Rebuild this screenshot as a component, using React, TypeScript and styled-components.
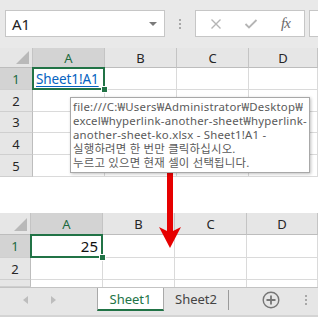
import React from 'react';
import styled, { createGlobalStyle } from 'styled-components';

const Global = createGlobalStyle`
  html, body { margin: 0; padding: 0; background: #fff; }
  body { width: 318px; height: 317px; overflow: hidden; }
`;

const FONT = `"Noto Sans", "Noto Sans CJK KR", sans-serif`;

const Page = styled.div`
  position: relative;
  width: 318px;
  height: 317px;
  overflow: hidden;
  display: flex;
  flex-direction: column;
  font-family: ${FONT};
  background: #fff;
`;

/* ---------- formula bar ---------- */
const FormulaBar = styled.div`
  height: 48px;
  flex: none;
  box-sizing: border-box;
  background: #e9e9e9;
  display: flex;
  align-items: flex-start;
  padding: 10px 0 0 5px;
`;

const NameBox = styled.div`
  width: 160px;
  height: 27px;
  box-sizing: border-box;
  background: #fff;
  border: 1px solid #c6c6c6;
  display: flex;
  align-items: center;
  justify-content: space-between;
  padding: 0 7px 0 6px;
  font-size: 15px;
  color: #222;
`;

const DropTri = styled.span`
  width: 0;
  height: 0;
  border-left: 4px solid transparent;
  border-right: 4px solid transparent;
  border-top: 4px solid #7a7a7a;
`;

const Grip = styled.div`
  width: 30px;
  height: 27px;
  display: flex;
  flex-direction: column;
  align-items: center;
  justify-content: center;
  gap: 2px;
`;

const GripDot = styled.span`
  width: 2px;
  height: 2px;
  background: #a8a8a8;
`;

const FxBox = styled.div`
  width: 110px;
  height: 27px;
  box-sizing: border-box;
  background: #fff;
  border: 1px solid #c6c6c6;
  display: flex;
  padding-left: 2px;
`;

const FxSlot = styled.div`
  width: 35px;
  display: flex;
  align-items: center;
  justify-content: center;
`;

const FxText = styled.span`
  font-family: "Liberation Serif", serif;
  font-style: italic;
  font-size: 15px;
  color: #6a6a6a;
  letter-spacing: -1px;
`;

const FormulaInput = styled.div`
  flex: 1;
  height: 27px;
  margin-left: 4px;
  box-sizing: border-box;
  background: #fff;
  border: 1px solid #c6c6c6;
  border-right: none;
`;

/* ---------- sheet grid ---------- */
const Sheet = styled.div<{ $rh: number; $rows: string }>`
  display: grid;
  flex: none;
  grid-template-columns: ${p => p.$rh}px 72px 72px 72px 1fr;
  grid-template-rows: ${p => p.$rows};
  background: #fff;
`;

const Corner = styled.div`
  position: relative;
  background: #e6e6e6;
  border-right: 1px solid #c4c4c4;
  border-bottom: 1px solid #bdbdbd;
`;

const CornerTri = styled.span`
  position: absolute;
  right: 3px;
  bottom: 3px;
  width: 0;
  height: 0;
  border-style: solid;
  border-width: 0 0 13px 13px;
  border-color: transparent transparent #b9b9b9 transparent;
`;

const ColHead = styled.div<{ $sel?: boolean }>`
  background: ${p => (p.$sel ? '#d3d3d3' : '#e6e6e6')};
  color: ${p => (p.$sel ? '#1d6a3f' : '#262626')};
  border-right: 1px solid #c4c4c4;
  border-bottom: 1px solid ${p => (p.$sel ? '#a9a9a9' : '#bdbdbd')};
  display: flex;
  align-items: center;
  justify-content: center;
  font-size: 13px;
`;

const RowHead = styled.div<{ $sel?: boolean }>`
  background: ${p => (p.$sel ? '#d3d3d3' : '#e6e6e6')};
  color: ${p => (p.$sel ? '#1d6a3f' : '#262626')};
  border-right: 1px solid #bdbdbd;
  border-bottom: 1px solid #cfcfcf;
  display: flex;
  align-items: center;
  justify-content: center;
  font-size: 13px;
`;

const Cell = styled.div<{ $partial?: boolean }>`
  position: relative;
  border-right: 1px solid #dadada;
  border-bottom: ${p => (p.$partial ? 'none' : '1px solid #dadada')};
`;

const ActiveCell = styled.div<{ $right?: boolean }>`
  position: relative;
  border-right: 1px solid #dadada;
  border-bottom: 1px solid #dadada;
  display: flex;
  align-items: center;
  justify-content: ${p => (p.$right ? 'flex-end' : 'flex-start')};
  padding: 0 4px 0 3px;
  font-size: 15px;
  color: #111;
  z-index: 1;
  &::after {
    content: '';
    position: absolute;
    left: -1px;
    top: -1px;
    right: -1px;
    bottom: -1px;
    border: 2px solid #217346;
    pointer-events: none;
  }
`;

const FillHandle = styled.span`
  position: absolute;
  right: -4px;
  bottom: -4px;
  width: 5px;
  height: 5px;
  background: #217346;
  border: 1px solid #fff;
  z-index: 2;
`;

const LinkText = styled.span`
  color: #0563c1;
  text-decoration: underline;
  text-underline-offset: 2px;
  font-size: 13.5px;
  letter-spacing: -0.1px;
`;

const Spacer = styled.div`
  height: 36px;
  flex: none;
`;

/* ---------- tab bar ---------- */
const TabBar = styled.div`
  height: 24px;
  flex: none;
  box-sizing: border-box;
  display: flex;
  align-items: stretch;
  background: #e6e6e6;
  border-top: 1px solid #c3c3c3;
`;

const NavArea = styled.div`
  width: 97px;
  display: flex;
  align-items: center;
  padding-left: 23px;
  gap: 23px;
  box-sizing: border-box;
`;

const NavArrow = styled.span<{ $dir: 'l' | 'r' }>`
  width: 0;
  height: 0;
  border-top: 4px solid transparent;
  border-bottom: 4px solid transparent;
  ${p => (p.$dir === 'l' ? 'border-right: 5px solid #bdbdbd;' : 'border-left: 5px solid #bdbdbd;')}
`;

const Tab = styled.div<{ $active?: boolean; $w: number }>`
  width: ${p => p.$w}px;
  box-sizing: border-box;
  display: flex;
  align-items: center;
  justify-content: center;
  font-size: 13px;
  padding-bottom: ${p => (p.$active ? '0' : '2px')};
  color: ${p => (p.$active ? '#217346' : '#444')};
  background: ${p => (p.$active ? '#fff' : 'transparent')};
  border-left: ${p => (p.$active ? '1px solid #a9a9a9' : 'none')};
  border-right: ${p => (p.$active ? '1px solid #a9a9a9' : 'none')};
  border-bottom: ${p => (p.$active ? '2px solid #217346' : 'none')};
`;

const TabDivider = styled.span`
  width: 1px;
  align-self: center;
  height: 20px;
  background: #9a9a9a;
`;

const PlusSlot = styled.div`
  width: 70px;
  display: flex;
  align-items: center;
  justify-content: flex-start;
  padding-left: 33px;
  box-sizing: border-box;
`;

const VDots = styled.div`
  display: flex;
  flex-direction: column;
  align-items: center;
  justify-content: center;
  gap: 2px;
  width: 14px;
`;

const BottomStrip = styled.div`
  height: 6px;
  flex: none;
  background: #e6e6e6;
  box-sizing: border-box;
  border-bottom: 2px solid #d4d4d4;
`;

/* ---------- overlays ---------- */
const Tooltip = styled.div`
  position: absolute;
  left: 70px;
  top: 97px;
  width: 240px;
  height: 76px;
  box-sizing: border-box;
  background: #fff;
  border: 1px solid #a8a8a8;
  box-shadow: 1px 1px 3px rgba(0, 0, 0, 0.25);
  padding: 2px 2px 0 2px;
  font-size: 11.4px;
  letter-spacing: 0.22px;
  color: #5a5a5a;
  z-index: 5;
  display: flex;
  flex-direction: column;
`;

const TipLine = styled.div`
  white-space: nowrap;
  height: 14px;
  line-height: 13px;
`;

const ArrowSvg = styled.svg`
  position: absolute;
  left: 155px;
  top: 160px;
  z-index: 4;
`;

type SheetProps = {
  rh: number;
  rows: number[];
  headH: number;
  partial?: number;
  active: React.ReactNode;
  right?: boolean;
};

function Grid({ rh, rows, headH, partial, active, right }: SheetProps) {
  const template = [headH, ...rows, ...(partial ? [partial] : [])].map(h => `${h}px`).join(' ');
  const cols = ['A', 'B', 'C', 'D'];
  return (
    <Sheet $rh={rh} $rows={template}>
      <Corner>
        <CornerTri />
      </Corner>
      {cols.map(c => (
        <ColHead key={c} $sel={c === 'A'}>
          {c}
        </ColHead>
      ))}
      {rows.map((_, i) => (
        <React.Fragment key={i}>
          <RowHead $sel={i === 0}>{i + 1}</RowHead>
          {i === 0 ? (
            <ActiveCell $right={right}>
              {active}
              <FillHandle />
            </ActiveCell>
          ) : (
            <Cell />
          )}
          <Cell />
          <Cell />
          <Cell />
        </React.Fragment>
      ))}
      {partial ? (
        <>
          <RowHead />
          <Cell $partial />
          <Cell $partial />
          <Cell $partial />
          <Cell $partial />
        </>
      ) : null}
    </Sheet>
  );
}

export default function App() {
  return (
    <Page>
      <Global />
      <FormulaBar>
        <NameBox>
          <span>A1</span>
          <DropTri />
        </NameBox>
        <Grip>
          <GripDot />
          <GripDot />
          <GripDot />
        </Grip>
        <FxBox>
          <FxSlot>
            <svg width="12" height="12" viewBox="0 0 12 12">
              <path d="M1.5 1.5 L10.5 10.5 M10.5 1.5 L1.5 10.5" stroke="#b5b5b5" strokeWidth="1.4" fill="none" />
            </svg>
          </FxSlot>
          <FxSlot>
            <svg width="14" height="12" viewBox="0 0 14 12">
              <path d="M1.5 6 L5 9.5 L12.5 2" stroke="#b5b5b5" strokeWidth="1.8" fill="none" />
            </svg>
          </FxSlot>
          <FxSlot>
            <FxText>fx</FxText>
          </FxSlot>
        </FxBox>
        <FormulaInput />
      </FormulaBar>

      <Grid
        rh={33}
        headH={20}
        rows={[22, 22, 21, 22, 22]}
        active={<LinkText>Sheet1!A1</LinkText>}
      />

      <Spacer />

      <Grid rh={31} headH={22} rows={[23, 22]} partial={7} active={<span>25</span>} right />

      <TabBar>
        <NavArea>
          <NavArrow $dir="l" />
          <NavArrow $dir="r" />
        </NavArea>
        <Tab $active $w={67}>Sheet1</Tab>
        <Tab $w={64}>Sheet2</Tab>
        <TabDivider />
        <PlusSlot>
          <svg width="18" height="18" viewBox="0 0 18 18">
            <circle cx="9" cy="9" r="7.8" stroke="#767676" strokeWidth="1.4" fill="none" />
            <path d="M9 4.5 V13.5 M4.5 9 H13.5" stroke="#767676" strokeWidth="1.8" />
          </svg>
        </PlusSlot>
        <VDots>
          <GripDot />
          <GripDot />
          <GripDot />
        </VDots>
      </TabBar>
      <BottomStrip />

      <Tooltip>
        <TipLine>file:///C:₩Users₩Administrator₩Desktop₩</TipLine>
        <TipLine>excel₩hyperlink-another-sheet₩hyperlink-</TipLine>
        <TipLine>another-sheet-ko.xlsx - Sheet1!A1 -</TipLine>
        <TipLine>실행하려면 한 번만 클릭하십시오.</TipLine>
        <TipLine>누르고 있으면 현재 셀이 선택됩니다.</TipLine>
      </Tooltip>

      <ArrowSvg width="30" height="92" viewBox="0 0 30 92">
        <rect x="12" y="0" width="6" height="72" fill="#e60000" />
        <path d="M4 67 L12 71 L18 71 L26 67 L15 88 Z" fill="#e60000" />
      </ArrowSvg>
    </Page>
  );
}
